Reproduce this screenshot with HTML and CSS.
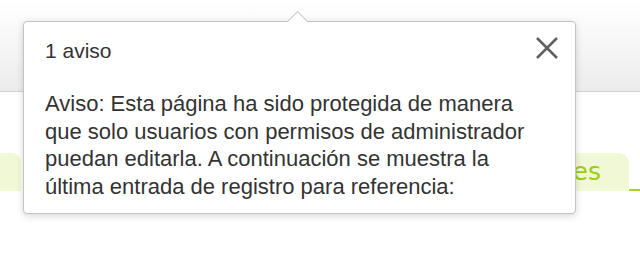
FILE: index.html
```html
<!DOCTYPE html>
<html lang="es">
<head>
<meta charset="utf-8">
<title>Aviso</title>
<link rel="stylesheet" href="styles.css">
</head>
<body>
  <header class="topbar"></header>
  <main class="content">
    <nav class="tabs">
      <div class="tab tab-left"></div>
      <div class="tab-gap"></div>
      <div class="tab tab-right">Opciones</div>
      <div class="tab-line"></div>
    </nav>
  </main>
  <div class="popover" role="dialog">
    <span class="popover-arrow"></span>
    <div class="popover-head">
      <span class="popover-title">1 aviso</span>
      <button class="popover-close" aria-label="Cerrar">
        <svg width="24" height="24" viewBox="0 0 24 24"><path d="M2 2 L22 22 M22 2 L2 22" stroke="#616161" stroke-width="2.6" fill="none"/></svg>
      </button>
    </div>
    <p class="popover-body">Aviso: Esta página ha sido protegida de manera que solo usuarios con permisos de administrador puedan editarla. A continuación se muestra la última entrada de registro para referencia:</p>
  </div>
</body>
</html>
```
FILE: styles.css
```css
html, body {
  margin: 0;
  padding: 0;
  background: #fff;
}
body {
  width: 640px;
  height: 263px;
  overflow: hidden;
  position: relative;
  font-family: "Liberation Sans", Arial, sans-serif;
}
.topbar {
  height: 91px;
  background: linear-gradient(#ffffff, #ececec);
  border-bottom: 1px solid #d2d2d2;
}
.content {
  padding-top: 61px;
}
.tabs {
  display: flex;
  height: 38px;
}
.tab {
  background: #f1f8d6;
  box-sizing: border-box;
}
.tab-left {
  width: 21px;
  border-top-right-radius: 9px;
}
.tab-gap {
  flex: 1;
}
.tab-right {
  width: 160px;
  border-top-right-radius: 11px;
  text-align: right;
  padding-right: 28px;
  padding-top: 4px;
  font-family: "DejaVu Sans", sans-serif;
  font-size: 25px;
  color: #9dcc1a;
  line-height: 30px;
}
.tab-line {
  width: 11px;
  align-self: flex-end;
  height: 2px;
  background: #a6d42e;
  margin-bottom: 0;
}
.popover {
  position: absolute;
  left: 23px;
  top: 21px;
  width: 553px;
  box-sizing: border-box;
  background: #fff;
  border: 1px solid #c4c4c4;
  border-radius: 4px;
  box-shadow: 0 2px 7px rgba(0, 0, 0, 0.16);
  padding: 15px 16px 12px 21px;
  color: #333;
}
.popover-arrow {
  position: absolute;
  left: 266px;
  top: -8px;
  width: 15px;
  height: 15px;
  box-sizing: border-box;
  background: #fff;
  border-left: 1px solid #c4c4c4;
  border-top: 1px solid #c4c4c4;
  transform: rotate(45deg);
}
.popover-head {
  display: flex;
  justify-content: space-between;
  align-items: flex-start;
}
.popover-title {
  font-size: 21px;
  line-height: 28px;
}
.popover-close {
  border: 0;
  background: none;
  padding: 0;
  margin-top: -1px;
  width: 24px;
  height: 24px;
  display: block;
}
.popover-close svg {
  display: block;
}
.popover-body {
  margin: 25px 24px 0 0;
  font-size: 22px;
  line-height: 27.67px;
}
```
